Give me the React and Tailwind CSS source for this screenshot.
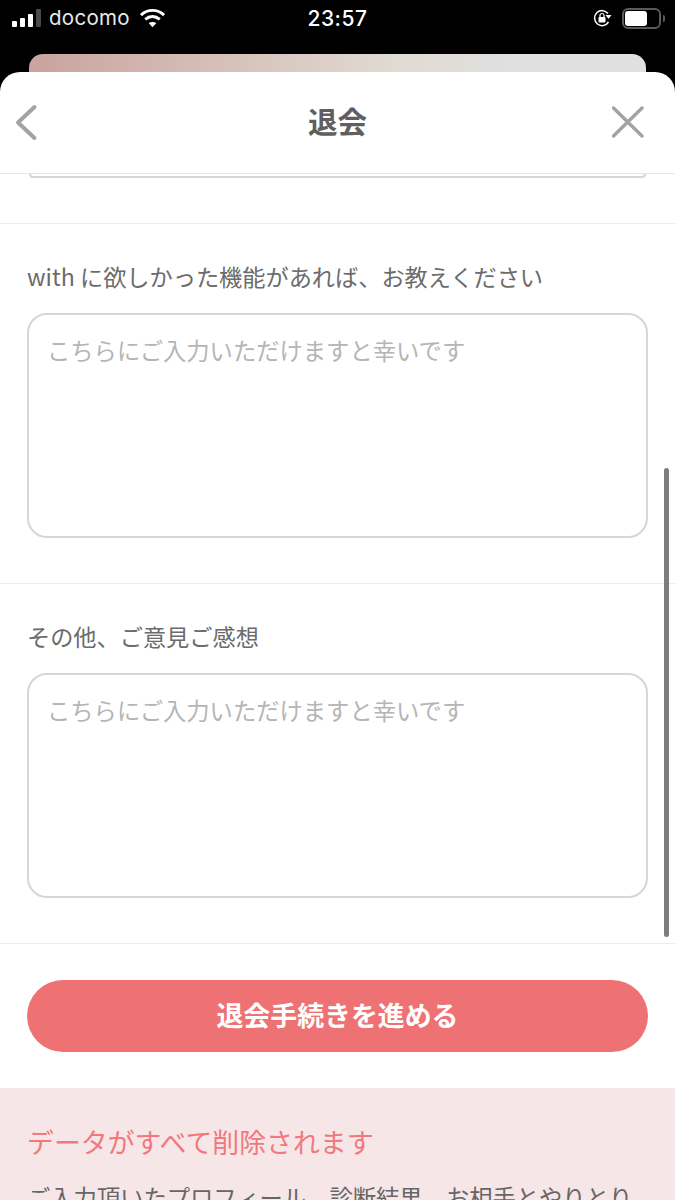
const jp = { fontFamily: '"Noto Sans CJK JP", "Noto Sans", sans-serif' };

function StatusBar() {
    return (
        <div className="flex h-[54px] shrink-0 items-start justify-between pr-[10px] pl-3 pt-[6px] text-white">
            <div className="flex h-6 w-[200px] items-center">
                <svg width="29" height="20" viewBox="0 0 29 20">
                    <rect x="0" y="13" width="5" height="6" rx="1" fill="#fff" />
                    <rect x="8" y="10" width="5" height="9" rx="1" fill="#fff" />
                    <rect x="16" y="6" width="5" height="13" rx="1" fill="#fff" />
                    <rect x="24" y="1" width="5" height="18" rx="1" fill="#4a4a4a" />
                </svg>
                <span className="ml-2 text-[20.5px] leading-none tracking-[0.3px] text-[#e8e8e8]" style={{ fontFamily: "Inter, sans-serif" }}>docomo</span>
                <svg className="ml-[9px]" width="27" height="20" viewBox="0 0 28 20" fill="none" stroke="#fff" strokeWidth="3">
                    <path d="M2 7 C9 0.5 19 0.5 26 7" />
                    <path d="M6.5 11.5 C11 7.5 17 7.5 21.5 11.5" />
                    <path d="M14 19.5 L10 15.3 C12.3 13.6 15.7 13.6 18 15.3 Z" fill="#fff" stroke="none" />
                </svg>
            </div>
            <span className="ml-[-2px] text-[21px] leading-[26px] font-medium tracking-[0.5px]" style={{ fontFamily: "Inter, sans-serif" }}>23:57</span>
            <div className="flex h-6 w-[200px] items-center justify-end gap-[10px]">
                <svg width="20" height="20" viewBox="0 0 20 20" fill="none">
                    <path d="M16 5.5 A7.5 7.5 0 1 0 16.5 14" stroke="#fff" strokeWidth="1.5" />
                    <path d="M13.5 7 L19.5 7 L16.5 11 Z" fill="#fff" />
                    <rect x="6.5" y="9" width="7" height="5.5" rx="1" fill="#fff" />
                    <path d="M8 9 V7.5 A2 2 0 0 1 12 7.5 V9" stroke="#fff" strokeWidth="1.2" />
                </svg>
                <div className="flex items-center gap-[2px]">
                    <div className="h-[21px] w-[39px] rounded-[6px] border-2 border-[#5a5a5a] p-[1px]">
                        <div className="h-full w-[22px] rounded-[3px] bg-white" />
                    </div>
                    <div className="h-[7px] w-[2px] rounded-r-sm bg-[#5a5a5a]" />
                </div>
            </div>
        </div>
    );
}

function FeedbackField({ label }) {
    return (
        <section className="border-b border-[#ebebeb] px-[27px] pt-[37px] pb-[45px]">
            <p className="text-[23.2px] leading-[30px] text-[#6b6b6b]">{label}</p>
            <div className="mt-[22px] h-[225px] rounded-[20px] border-2 border-[#d6d6d6] pt-[19px] pl-[18px] text-[23.3px] leading-[33px] text-[#b5b5b5]">
                こちらにご入力いただけますと幸いです
            </div>
        </section>
    );
}

export default function App() {
    return (
        <div className="flex h-[1200px] flex-col overflow-hidden bg-black" style={jp}>
            <StatusBar />
            <div className="mx-[29px] h-[18px] shrink-0 rounded-t-[14px] bg-gradient-to-r from-[#c9a39d] via-[#e0dbd3] via-60% to-[#e0e0e0] to-80%" />
            <div className="relative flex-1 overflow-hidden rounded-t-[20px] bg-white">
                <header className="flex h-[102px] items-center justify-between border-b border-[#e6e6e6] px-[14px] pb-[2px]">
                    <svg width="32" height="40" viewBox="0 0 32 40" fill="none" stroke="#a3a3a3" strokeWidth="4" strokeLinecap="round" strokeLinejoin="round" className="mr-[17px]">
                        <path d="M20.5 5 L4 20.5 L20.5 36" />
                    </svg>
                    <h1 className="pb-1 text-[29.5px] leading-[40px] font-bold text-[#5f5f5f]">退会</h1>
                    <svg width="32" height="40" viewBox="0 0 32 40" fill="none" stroke="#a3a3a3" strokeWidth="3.4" strokeLinecap="round" className="mr-[17px]">
                        <path d="M1.5 6 L30 34 M30 6 L1.5 34" />
                    </svg>
                </header>
                <section className="h-[50px] border-b border-[#ebebeb]">
                    <div className="mx-[29px] h-[4px] rounded-b-[14px] border-x-2 border-b-2 border-[#d6d6d6]" />
                </section>
                <FeedbackField label="with に欲しかった機能があれば、お教えください" />
                <FeedbackField label="その他、ご意見ご感想" />
                <div className="px-[27px] py-[36px]">
                    <button className="h-[72px] w-full rounded-full bg-[#ee7274] pb-[2px] text-[26.9px] font-bold text-white">退会手続きを進める</button>
                </div>
                <section className="h-[200px] bg-[#f7e6e8] px-[27px] pt-[34px]">
                    <h2 className="text-[26.9px] leading-[40px] text-[#f0797d]">データがすべて削除されます</h2>
                    <p className="mt-[17px] text-[23.3px] leading-[36px] text-[#666]">ご入力頂いたプロフィール、診断結果、お相手とやりとりしたメッセージなど</p>
                </section>
                <div className="absolute top-[396px] right-[6px] h-[469px] w-[5px] rounded-full bg-[#7d7d7d]" />
            </div>
        </div>
    );
}
